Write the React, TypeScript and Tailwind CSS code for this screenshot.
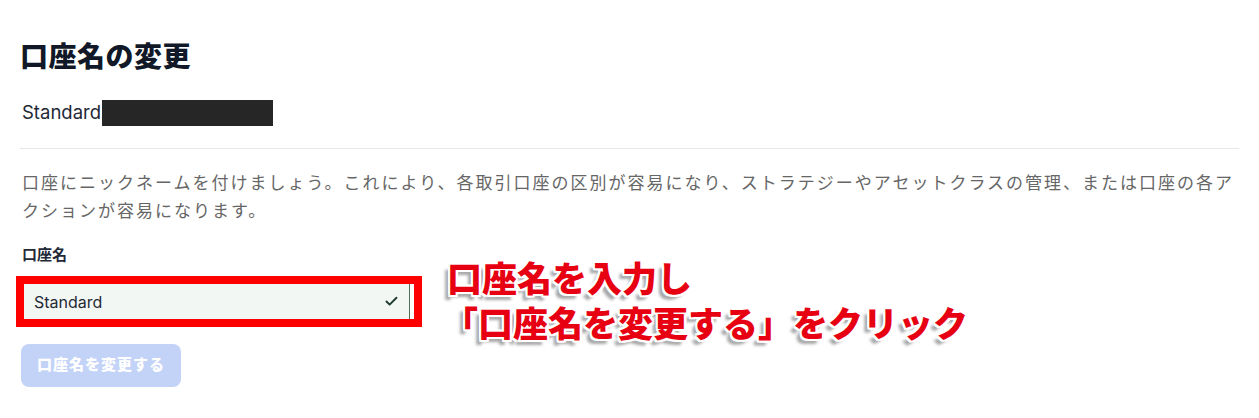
import { Check } from 'lucide-react'

const font = "font-['Inter','Noto_Sans_CJK_JP',sans-serif]"

export default function App() {
  return (
    <div className={`${font} relative h-[418px] w-full overflow-hidden bg-white px-[20px] pt-[38px]`}>
      <h1 className="text-[28px] font-black leading-[38px] tracking-[0.5px] text-[#111827]">口座名の変更</h1>

      <div className="mt-[24px] flex h-[26px] items-center pl-[2px]">
        <span className="text-[18.5px] text-[#1f2937]">Standard</span>
        <span className="ml-[1px] h-[26px] w-[171px] bg-[#262626]" />
      </div>

      <div className="mt-[22px] border-t border-[#e5e7eb]" />

      <p className="mt-[20px] pl-[2px] text-[17px] leading-[28px] tracking-[2px] text-[#666666]">
        口座にニックネームを付けましょう。これにより、各取引口座の区別が容易になり、ストラテジーやアセットクラスの管理、または口座の各アクションが容易になります。
      </p>

      <label className="mt-[19px] block pl-[2px] text-[15px] font-bold leading-[22px] text-[#1f2937]">
        口座名
      </label>

      <div className="mt-[10px] -ml-[4px] w-[406px] border-[8px] border-[#ff0000]">
        <div className="flex h-[35px] w-[386px] items-center justify-between border-r border-[#4f6f5c] bg-[#f3f7f3] pl-[10px] pr-[10px]">
          <span className="text-[16px] text-[#1f2937]">Standard</span>
          <Check className="h-[15px] w-[15px] text-[#1f3a2c]" strokeWidth={3} />
        </div>
      </div>

      <button className="mt-[17px] ml-[1px] flex h-[43px] w-[160px] items-center justify-center rounded-[8px] bg-[#c3d3f7] text-[15px] font-black tracking-[1px] text-white">
        口座名を変更する
      </button>

      <div className="absolute left-[443px] top-[257px] text-[35px] font-black leading-[45px] text-[#e60012] [text-shadow:2px_0_0_#fff,-2px_0_0_#fff,0_2px_0_#fff,0_-2px_0_#fff,2px_2px_0_#fff,-2px_-2px_0_#fff,2px_-2px_0_#fff,-2px_2px_0_#fff,-5px_5px_3px_rgba(0,0,0,0.35)]">
        <div className="pl-[4px]">口座名を入力し</div>
        <div>「口座名を変更する」をクリック</div>
      </div>
    </div>
  )
}
